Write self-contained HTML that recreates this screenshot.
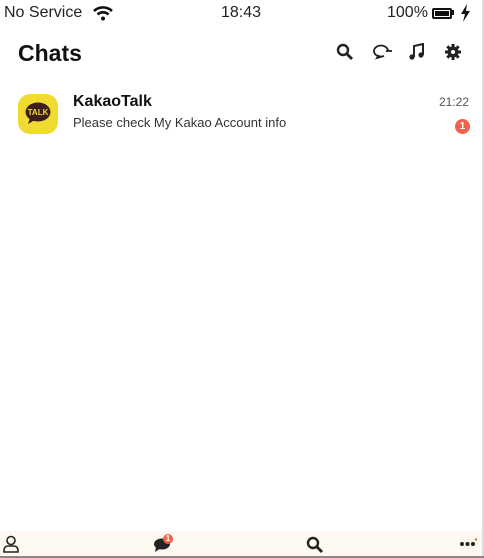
<!DOCTYPE html>
<html><head><meta charset="utf-8"><style>
body{margin:0;width:484px;height:558px;overflow:hidden;background:#fff;font-family:"Liberation Sans","Noto Sans CJK KR",sans-serif;position:relative;color:#111}
.a{position:absolute}
</style></head><body>
<div class="a" style="left:482px;top:0;width:2px;height:558px;background:#ddd"></div>
<div class="a" style="left:4px;top:4px;font-size:16px;color:#222">No Service</div>
<svg class="a" style="left:92px;top:5px" width="22" height="16" viewBox="0 0 22 16"><path d="M2 6a13 13 0 0 1 18 0" stroke="#111" stroke-width="2.6" fill="none"/><path d="M5.5 9.5a8 8 0 0 1 11 0" stroke="#111" stroke-width="2.6" fill="none"/><circle cx="11" cy="13.5" r="2" fill="#111"/></svg>
<div class="a" style="left:221px;top:4px;font-size:16px;color:#222">18:43</div>
<div class="a" style="left:387px;top:4px;font-size:16px;color:#222">100%</div>
<div class="a" style="left:432px;top:8px;width:16px;height:7px;border:2px solid #111;border-radius:2px;background:#111;box-shadow:inset 0 0 0 1px #fff"></div>
<div class="a" style="left:452px;top:10px;width:2px;height:5px;background:#111"></div>
<svg class="a" style="left:460px;top:4px" width="11" height="18" viewBox="0 0 11 18"><path d="M7 0L1 10h4l-2 8 7-11H6z" fill="#111"/></svg>
<div class="a" style="left:18px;top:40px;font-size:23px;font-weight:bold">Chats</div>
<svg class="a" style="left:336px;top:43px" width="18" height="18" viewBox="0 0 18 18"><circle cx="7" cy="7" r="5" stroke="#222" stroke-width="2.4" fill="none"/><path d="M11 11l5 5" stroke="#222" stroke-width="2.8"/></svg>
<svg class="a" style="left:372px;top:43px" width="22" height="18" viewBox="0 0 22 18"><path d="M16 8a7 5.5 0 1 0-4 5l-7 2 2-3" stroke="#222" stroke-width="1.8" fill="none"/><path d="M14 8h6" stroke="#222" stroke-width="1.8"/></svg>
<svg class="a" style="left:408px;top:43px" width="18" height="18" viewBox="0 0 18 18"><path d="M6 14V3l9-2v11" stroke="#222" stroke-width="2" fill="none"/><circle cx="4" cy="14" r="2.6" fill="#222"/><circle cx="13" cy="12" r="2.6" fill="#222"/></svg>
<svg class="a" style="left:444px;top:43px" width="18" height="18" viewBox="0 0 18 18"><g stroke="#222" stroke-width="3"><path d="M9 1v16M1 9h16M3.3 3.3l11.4 11.4M14.7 3.3L3.3 14.7"/></g><circle cx="9" cy="9" r="5.5" fill="#222"/><circle cx="9" cy="9" r="2" fill="#fff"/></svg>
<div class="a" style="left:18px;top:94px;width:40px;height:40px;border-radius:12px;background:#f0dc30"></div>
<svg class="a" style="left:24px;top:101px" width="28" height="26" viewBox="0 0 28 26"><ellipse cx="14" cy="11" rx="12.5" ry="9.5" fill="#3c1e1e"/><path d="M6 17l-2 6 7-4z" fill="#3c1e1e"/><text x="14" y="14" font-size="8" font-weight="bold" fill="#f0dc30" text-anchor="middle" font-family="Liberation Sans">TALK</text></svg>
<div class="a" style="left:73px;top:93px;font-size:16px;font-weight:bold">KakaoTalk</div>
<div class="a" style="left:73px;top:115px;font-size:13px;color:#333">Please check My Kakao Account info</div>
<div class="a" style="left:439px;top:95px;font-size:12px;color:#555">21:22</div>
<div class="a" style="left:455px;top:119px;width:15px;height:15px;border-radius:50%;background:#f0604a;color:#fff;font-size:10px;font-weight:bold;text-align:center;line-height:15px">1</div>
<div class="a" style="left:0;top:531px;width:482px;height:25px;background:#fdf9f0"></div>
<div class="a" style="left:0;top:556px;width:484px;height:2px;background:#888"></div>
<svg class="a" style="left:3px;top:535px" width="16" height="18" viewBox="0 0 16 18"><circle cx="8" cy="5.5" r="4" stroke="#222" stroke-width="1.6" fill="none"/><path d="M1 17v-2a4 4 0 0 1 4-4h6a4 4 0 0 1 4 4v2z" stroke="#222" stroke-width="1.6" fill="none"/></svg>
<svg class="a" style="left:153px;top:537px" width="20" height="16" viewBox="0 0 20 16"><ellipse cx="9" cy="7" rx="8" ry="5.5" fill="#222"/><path d="M3 10l-1 5 6-4z" fill="#222"/></svg>
<div class="a" style="left:163px;top:534px;width:10px;height:10px;border-radius:50%;background:#f0604a;color:#fff;font-size:8px;font-weight:bold;text-align:center;line-height:10px">1</div>
<svg class="a" style="left:306px;top:536px" width="18" height="18" viewBox="0 0 18 18"><circle cx="7" cy="7" r="5" stroke="#222" stroke-width="2.4" fill="none"/><path d="M11 11l5 5" stroke="#222" stroke-width="2.8"/></svg>
<svg class="a" style="left:459px;top:538px" width="20" height="10" viewBox="0 0 20 10"><circle cx="3" cy="6" r="2" fill="#222"/><circle cx="8.5" cy="6" r="2" fill="#222"/><circle cx="14" cy="6" r="2" fill="#222"/><circle cx="17" cy="1.5" r="1.2" fill="#f0604a"/></svg>
</body></html>
